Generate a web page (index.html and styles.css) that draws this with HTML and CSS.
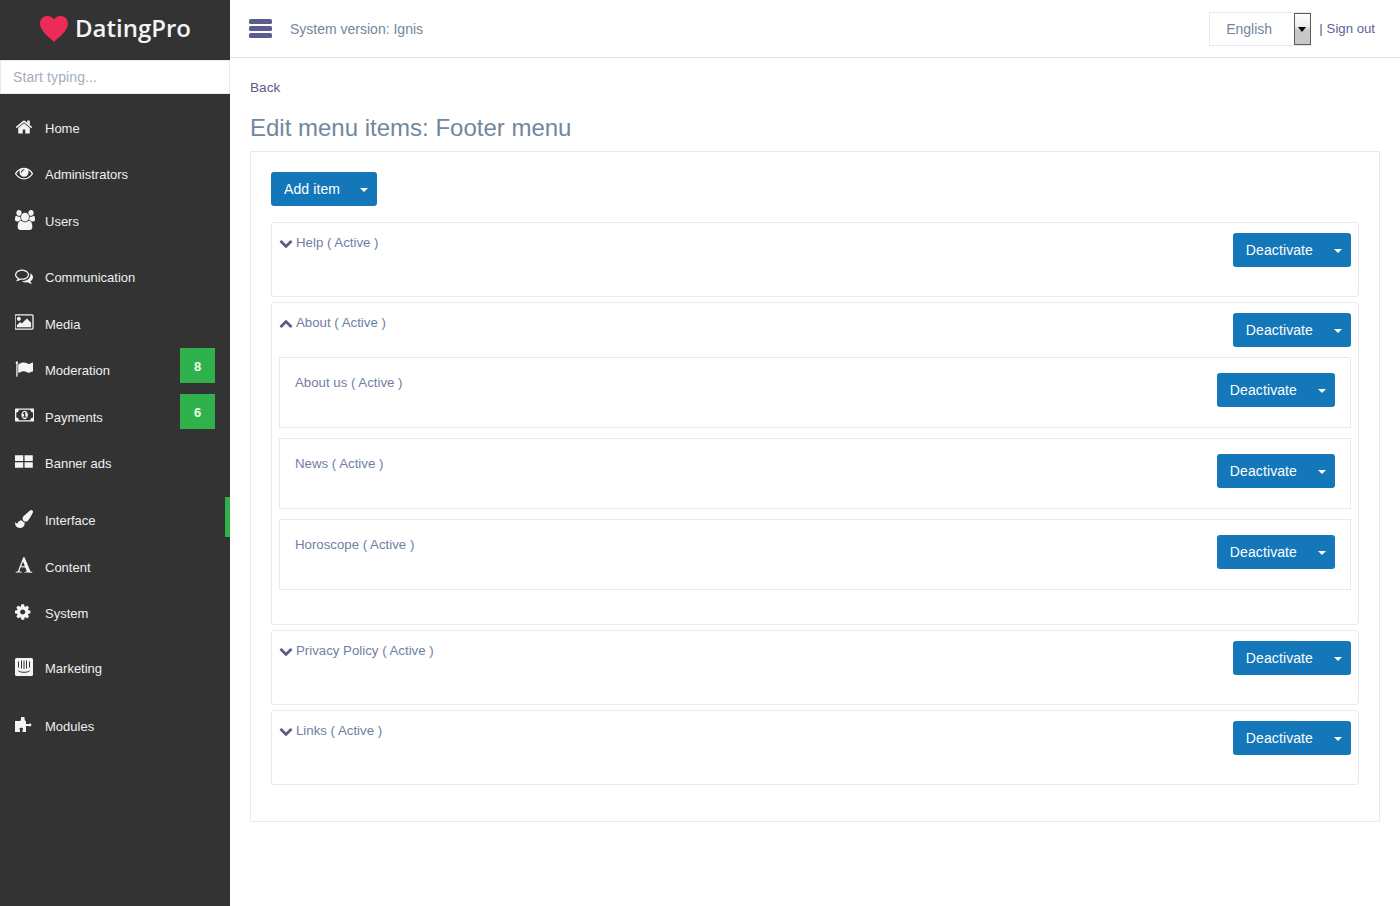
FILE: index.html
```html
<!DOCTYPE html>
<html lang="en">
<head>
<meta charset="utf-8">
<title>Edit menu items: Footer menu</title>
<link rel="stylesheet" href="styles.css">
</head>
<body>
<div class="app">
  <aside class="sidebar">
    <a class="logo" href="#">
      <svg class="logo-heart" viewBox="0 0 28 26"><path d="M14 26C9 21 0 15 0 7.500 0 3 3.400 0 7.500 0 10.300 0 12.700 1.300 14 3.500 15.300 1.300 17.700 0 20.500 0 24.600 0 28 3 28 7.500 28 15 19 21 14 26Z"/></svg>
      <span class="logo-text">DatingPro</span>
    </a>
    <div class="search"><input class="search-input" type="text" placeholder="Start typing..."></div>
    <ul class="nav">
      <li class="nav-item"><span class="nav-icon"><svg class="ico" viewBox="0 0 1792 1792"><path d="M1472 992v480q0 26-19 45t-45 19h-384v-384h-256v384h-384q-26 0-45-19t-19-45v-480q0-1 .5-3t.5-3l575-474 575 474q1 2 1 6zm223-69l-62 74q-8 9-21 11h-3q-13 0-21-7l-692-577-692 577q-12 8-24 7-13-2-21-11l-62-74q-8-10-7-23.500t11-21.500l719-599q32-26 76-26t76 26l244 204v-195q0-14 9-23t23-9h192q14 0 23 9t9 23v408l219 182q10 8 11 21.500t-7 23.500z"/></svg></span>Home</li>
      <li class="nav-item nav-admin"><span class="nav-icon"><svg class="ico" viewBox="0 0 1792 1792"><path d="M1664 960q-152-236-381-353 61 104 61 225 0 185-131.500 316.500t-316.500 131.500-316.500-131.500-131.500-316.500q0-121 61-225-229 117-381 353 133 205 333.500 326.500t434.500 121.500 434.500-121.500 333.500-326.500zm-720-384q0-20-14-34t-34-14q-125 0-214.500 89.500t-89.500 214.500q0 20 14 34t34 14 34-14 14-34q0-86 61-147t147-61q20 0 34-14t14-34zm848 384q0 34-20 69-140 230-376.500 368.500t-499.500 138.500-499.500-139-376.500-368q-20-35-20-69t20-69q140-229 376.500-368t499.500-139 499.500 139 376.500 368q20 35 20 69z"/></svg></span>Administrators</li>
      <li class="nav-item"><span class="nav-icon"><svg class="ico ico-users" viewBox="0 0 1920 1792" preserveAspectRatio="none"><path d="M593 896q-162 5-265 128h-134q-82 0-138-40.500t-56-118.500q0-353 124-353 6 0 43.500 21t97.500 42.500 119 21.500q67 0 133-23-5 37-5 66 0 139 81 256zm1071 637q0 120-73 189.500t-194 69.500h-874q-121 0-194-69.500t-73-189.500q0-53 3.500-103.500t14-109 26.500-108.500 43-97.500 62-81 85.500-53.500 111.500-20q10 0 43 21.500t73 48 107 48 135 21.500 135-21.500 107-48 73-48 43-21.500q61 0 111.500 20t85.500 53.500 62 81 43 97.500 26.500 108.500 14 109 3.500 103.500zm-1024-1277q0 106-75 181t-181 75-181-75-75-181 75-181 181-75 181 75 75 181zm704 384q0 159-112.500 271.500t-271.500 112.500-271.500-112.500-112.500-271.500 112.500-271.500 271.500-112.500 271.500 112.500 112.500 271.500zm576 225q0 78-56 118.500t-138 40.500h-134q-103-123-265-128 81-117 81-256 0-29-5-66 66 23 133 23 59 0 119-21.500t97.500-42.500 43.500-21q124 0 124 353zm-128-609q0 106-75 181t-181 75-181-75-75-181 75-181 181-75 181 75 75 181z"/></svg></span>Users</li>
      <li class="nav-item nav-gap-a"><span class="nav-icon"><svg class="ico" viewBox="0 0 1792 1792"><path d="M704 384q-153 0-286 52t-211.500 141-78.500 191q0 82 53 158t149 132l97 56-35 84q34-20 62-39l44-31 53 10q78 14 153 14 153 0 286-52t211.500-141 78.500-191-78.500-191-211.500-141-286-52zm0-128q191 0 353.500 68.500t256.500 186.500 94 257-94 257-256.500 186.500-353.500 68.500q-86 0-176-16-124 88-278 128-36 9-86 16h-3q-11 0-20.500-8t-11.500-21q-1-3-1-6.500t.5-6.500 2-6l2.500-5 3.500-5.500 4-5 4.500-5 4-4.500q5-6 23-25t26-29.500 22.500-29 25-38.500 20.500-44q-124-72-195-177t-71-224q0-139 94-257t256.500-186.500 353.500-68.500zm822 1169q10 24 20.500 44t25 38.500 22.500 29 26 29.500 23 25q1 1 4 4.500t4.500 5 4 5 3.500 5.500l2.500 5 2 6 .5 6.500-1 6.500q-3 14-13 22t-22 7q-50-7-86-16-154-40-278-128-90 16-176 16-271 0-472-132 58 4 88 4 161 0 309-45t264-129q125-92 192-212t67-254q0-77-23-152 129 71 204 178t75 230q0 120-71 224.500t-195 176.500z"/></svg></span>Communication</li>
      <li class="nav-item"><span class="nav-icon"><svg class="ico ico-wide" viewBox="0 0 1920 1792"><path d="M576 576q0 80-56 136t-136 56-136-56-56-136 56-136 136-56 136 56 56 136zm1024 384v448h-1408v-192l320-320 160 160 512-512zm96-704h-1600q-13 0-22.500 9.500t-9.500 22.500v1216q0 13 9.500 22.500t22.500 9.500h1600q13 0 22.500-9.500t9.500-22.500v-1216q0-13-9.500-22.500t-22.500-9.500zm160 32v1216q0 66-47 113t-113 47h-1600q-66 0-113-47t-47-113v-1216q0-66 47-113t113-47h1600q66 0 113 47t47 113z"/></svg></span>Media</li>
      <li class="nav-item"><span class="nav-icon"><svg class="ico" viewBox="0 0 1792 1792"><path d="M320 256q0 72-64 110v1266q0 13-9.500 22.500t-22.500 9.500h-64q-13 0-22.500-9.500t-9.500-22.500v-1266q-64-38-64-110 0-53 37.500-90.500t90.500-37.500 90.500 37.500 37.500 90.500zm1472 64v763q0 25-12.500 38.500t-39.500 27.500q-215 116-369 116-61 0-123.500-22t-108.500-48-115.500-48-142.500-22q-192 0-464 146-17 9-33 9-26 0-45-19t-19-45v-742q0-32 31-55 21-14 79-43 236-120 421-120 107 0 200 29t219 88q38 19 88 19 54 0 117.500-21t110-47 88-47 54.500-21q26 0 45 19t19 45z"/></svg></span>Moderation<span class="badge badge-first">8</span></li>
      <li class="nav-item"><span class="nav-icon"><svg class="ico ico-wide" viewBox="0 0 1920 1792"><path d="M768 1152h384v-96h-128v-448h-114l-148 137 77 80q42-37 55-57h2v288h-128v96zm512-256q0 70-21 142t-59.500 134-101.500 101-138 39-138-39-101.500-101-59.500-134-21-142 21-142 59.500-134 101.500-101 138-39 138 39 101.500 101 59.500 134 21 142zm512 256v-512q-106 0-181-75t-75-181h-1152q0 106-75 181t-181 75v512q106 0 181 75t75 181h1152q0-106 75-181t181-75zm128-832v1152q0 26-19 45t-45 19h-1792q-26 0-45-19t-19-45v-1152q0-26 19-45t45-19h1792q26 0 45 19t19 45z"/></svg></span>Payments<span class="badge badge-second">6</span></li>
      <li class="nav-item"><span class="nav-icon"><svg class="ico" viewBox="0 0 1792 1792" preserveAspectRatio="none"><path d="M0 230H820V800H0ZM950 230H1770V800H950ZM0 910H820V1480H0ZM950 910H1770V1480H950Z"/></svg></span>Banner ads</li>
      <li class="nav-item nav-gap-b nav-active"><span class="nav-icon"><svg class="ico" viewBox="0 0 1792 1792"><path d="M1615 0q70 0 122.500 46.500t52.500 116.500q0 63-45 151-332 629-465 752-97 91-218 91-126 0-216.500-92.500t-90.500-219.500q0-128 92-212l638-579q59-54 130-54zm-909 1034q39 76 106.500 130t150.500 76l1 71q4 213-129.500 347t-348.500 134q-123 0-218-46.500t-152.500-127.500-86.500-183-29-220q7 5 41 30t62 44.500 59 36.500 46 17q41 0 55-37 25-66 57.500-112.500t69.500-76 88-47.500 103-25.500 125-10.500z"/></svg></span>Interface</li>
      <li class="nav-item"><span class="nav-icon"><svg class="ico" viewBox="0 0 1792 1792"><path d="M789 559l-170 450q33 0 136.500 2t160.500 2q19 0 57-2-87-253-184-452zm-725 1105l2-79q23-7 56-12.500t57-10.500 49.500-14.500 44.500-29 31-50.500l237-616 280-724h128q8 14 11 21l205 480q33 78 106 257.500t114 274.500q15 34 58 144.500t72 168.500q20 45 35 57 19 15 88 29.500t84 20.500q6 38 6 57 0 4-.5 13t-.5 13q-63 0-190-8t-191-8q-76 0-215 7t-178 8q0-43 4-78l131-28q1 0 12.500-2.500t15.500-3.500 14.500-4.500 15-6.500 11-8 9-11 2.500-14q0-16-31-96.500t-72-177.500-42-100l-450-2q-26 58-76.500 195.500t-50.500 162.500q0 22 14 37.500t43.500 24.500 48.500 13.500 57 8.500 41 4q1 19 1 58 0 9-2 27-58 0-174.500-10t-174.500-10q-8 0-26.500 4t-21.500 4q-80 14-188 14z"/></svg></span>Content</li>
      <li class="nav-item"><span class="nav-icon"><svg class="ico ico-gear" viewBox="128 0 1664 1792"><path d="M1152 896q0-106-75-181t-181-75-181 75-75 181 75 181 181 75 181-75 75-181zm512-109v222q0 12-8 23t-20 13l-185 28q-19 54-39 91 35 50 107 138 10 12 10 25t-9 23q-27 37-99 108t-94 71q-12 0-26-9l-138-108q-44 23-91 38-16 136-29 186-7 28-36 28h-222q-14 0-24.500-8.500t-11.500-21.500l-28-184q-49-16-90-37l-141 107q-10 9-25 9-14 0-25-11-126-114-165-168-7-10-7-23 0-12 8-23 15-21 51-66.500t54-70.500q-27-50-41-99l-183-27q-13-2-21-12.500t-8-23.500v-222q0-12 8-23t19-13l186-28q14-46 39-92-40-57-107-138-10-12-10-24 0-10 9-23 26-36 98.500-107.500t94.500-71.500q13 0 26 10l138 107q44-23 91-38 16-136 29-186 7-28 36-28h222q14 0 24.500 8.500t11.500 21.500l28 184q49 16 90 37l142-107q9-9 24-9 13 0 25 10 129 119 165 170 7 8 7 22 0 12-8 23-15 21-51 66.500t-54 70.500q26 50 41 98l183 28q13 2 21 12.500t8 23.500z"/></svg></span>System</li>
      <li class="nav-item nav-gap-c"><span class="nav-icon"><svg class="ico" viewBox="0 0 18 18"><path fill-rule="evenodd" d="M1.500 0H16.500A1.500 1.500 0 0 1 18 1.500V16.500A1.500 1.500 0 0 1 16.500 18H1.500A1.500 1.500 0 0 1 0 16.500V1.500A1.500 1.500 0 0 1 1.500 0ZM3 3.500V9.500H4V3.500ZM6 2.500V10.500H7V2.500ZM8.500 2.500V11H9.500V2.500ZM11 2.500V10.500H12V2.500ZM14 3.500V9.500H15V3.500ZM2.800 12.200 3.400 13.200C6.500 15.300 11.500 15.300 14.600 13.200L15.200 12.200C11.500 14.300 6.500 14.300 2.800 12.200Z"/></svg></span>Marketing</li>
      <li class="nav-item nav-gap-d"><span class="nav-icon"><svg class="ico" viewBox="0 0 18 18"><path d="M6 1H9.500V2.800C9.500 3.600 10 4 10 4.800H11V8H13.500C14 8 14.500 7.600 15.200 7.600 16.800 7.600 16.800 10.400 15.200 10.400 14.500 10.400 14 10 13.500 10H11V16H7.500V14.800C7.500 13.500 8 13.500 8 12.800 8 11.400 4.500 11.400 4.500 12.800 4.500 13.500 5 13.500 5 14.800V16H0V5H5.500C5.500 4 6 3.800 6 2.800Z"/></svg></span>Modules</li>
    </ul>
  </aside>
  <div class="main">
    <header class="topbar">
      <svg class="burger" viewBox="0 0 23 19"><rect width="23" height="5" rx="1.500"/><rect y="7" width="23" height="5" rx="1.500"/><rect y="14" width="23" height="5" rx="1.500"/></svg>
      <span class="version">System version: Ignis</span>
      <div class="lang">
        <span class="lang-value">English</span>
        <span class="lang-arrow"></span>
      </div>
      <span class="pipe">|</span>
      <a class="signout" href="#">Sign out</a>
    </header>
    <main class="content">
      <a class="back" href="#">Back</a>
      <h1 class="title">Edit menu items: Footer menu</h1>
      <section class="panel">
        <div class="btn btn-add"><span class="btn-label">Add item</span><span class="caret"></span></div>
        <div class="row">
          <div class="row-head">
            <svg class="chev" viewBox="0 0 1792 1792"><path d="M1683 808l-742 741q-19 19-45 19t-45-19l-742-741q-19-19-19-45.500t19-45.500l166-165q19-19 45-19t45 19l531 531 531-531q19-19 45-19t45 19l166 165q19 19 19 45.500t-19 45.500z"/></svg>
            <a class="row-title" href="#">Help ( Active )</a>
            <div class="btn"><span class="btn-label">Deactivate</span><span class="caret"></span></div>
          </div>
        </div>
        <div class="row row-open">
          <div class="row-head">
            <svg class="chev" viewBox="0 0 1792 1792"><path d="M1683 1331l-166 165q-19 19-45 19t-45-19l-531-531-531 531q-19 19-45 19t-45-19l-166-165q-19-19-19-45.500t19-45.500l742-741q19-19 45-19t45 19l742 741q19 19 19 45.500t-19 45.500z"/></svg>
            <a class="row-title" href="#">About ( Active )</a>
            <div class="btn"><span class="btn-label">Deactivate</span><span class="caret"></span></div>
          </div>
          <div class="sub">
            <a class="sub-title" href="#">About us ( Active )</a>
            <div class="btn"><span class="btn-label">Deactivate</span><span class="caret"></span></div>
          </div>
          <div class="sub">
            <a class="sub-title" href="#">News ( Active )</a>
            <div class="btn"><span class="btn-label">Deactivate</span><span class="caret"></span></div>
          </div>
          <div class="sub">
            <a class="sub-title" href="#">Horoscope ( Active )</a>
            <div class="btn"><span class="btn-label">Deactivate</span><span class="caret"></span></div>
          </div>
        </div>
        <div class="row">
          <div class="row-head">
            <svg class="chev" viewBox="0 0 1792 1792"><path d="M1683 808l-742 741q-19 19-45 19t-45-19l-742-741q-19-19-19-45.500t19-45.500l166-165q19-19 45-19t45 19l531 531 531-531q19-19 45-19t45 19l166 165q19 19 19 45.500t-19 45.500z"/></svg>
            <a class="row-title" href="#">Privacy Policy ( Active )</a>
            <div class="btn"><span class="btn-label">Deactivate</span><span class="caret"></span></div>
          </div>
        </div>
        <div class="row">
          <div class="row-head">
            <svg class="chev" viewBox="0 0 1792 1792"><path d="M1683 808l-742 741q-19 19-45 19t-45-19l-742-741q-19-19-19-45.500t19-45.500l166-165q19-19 45-19t45 19l531 531 531-531q19-19 45-19t45 19l166 165q19 19 19 45.500t-19 45.500z"/></svg>
            <a class="row-title" href="#">Links ( Active )</a>
            <div class="btn"><span class="btn-label">Deactivate</span><span class="caret"></span></div>
          </div>
        </div>
      </section>
    </main>
  </div>
</div>
</body>
</html>
```

FILE: styles.css
```css
* { box-sizing: border-box; }
html, body { margin: 0; height: 100%; }
body {
  font-family: "Liberation Sans", Arial, sans-serif;
  font-size: 14px;
  line-height: 20px;
  color: #73879c;
  background: #fff;
  overflow: hidden;
}
a { text-decoration: none; }
.app { display: flex; height: 906px; }

.sidebar { flex: 0 0 230px; background: #333; display: flex; flex-direction: column; }
.logo { height: 60px; display: flex; align-items: center; padding-left: 40px; gap: 7px; }
.logo-heart { width: 28px; height: 26px; fill: #ee2b57; margin-top: -2px; }
.logo-text { font-family: "Open Sans", sans-serif; font-size: 24px; font-weight: 600; color: #f4f4f4; line-height: 30px; margin-top: -4px; }
.search { height: 34px; }
.search-input {
  display: block; width: 100%; height: 34px; padding: 0 12px;
  border: 1px solid #e6e9ed; background: #fff;
  font: 14px "Liberation Sans", Arial, sans-serif; letter-spacing: .1px; color: #73879c; outline: 0;
}
.search-input::placeholder { color: #a4aebb; opacity: 1; }

.nav { list-style: none; margin: 0; padding: 11px 0 0; font-size: 13px; }
.nav-item { position: relative; height: 46.500px; padding: 2px 0 0 15px; display: flex; align-items: center; color: #eceff2; }
.nav-admin { margin-top: -1px; margin-bottom: 1px; }
.nav-gap-a { margin-top: 9.500px; }
.nav-gap-b { margin-top: 10.500px; }
.nav-gap-c { margin-top: 8.500px; }
.nav-gap-d { margin-top: 11.500px; }
.nav-icon { flex: 0 0 30px; display: flex; margin-top: -5px; }
.nav-admin .nav-icon { margin-top: -3px; }
.ico { width: 18px; height: 18px; fill: #f2f4f6; display: block; }
.ico-wide { width: 19.300px; }
.ico-users { width: 20px; height: 20px; }
.ico-gear { width: 16.700px; }
.badge {
  position: absolute; right: 15px; width: 35px; height: 35px;
  background: #2fb24c; color: #eafbe9; font-weight: 700; font-size: 13px;
  line-height: 37px; text-align: center;
}
.badge-first { top: 1px; }
.badge-second { top: 0; }
.nav-active::after {
  content: ""; position: absolute; right: 0; top: 0; width: 5px; height: 40px; background: #2fb24c;
}

.main { flex: 1; min-width: 0; display: flex; flex-direction: column; }
.topbar { height: 58px; border-bottom: 1px solid #dfe1e8; display: flex; align-items: center; padding: 0 25px 0 19px; }
.burger { width: 23px; height: 19px; fill: #5b5b8f; }
.version { margin-left: 18px; }
.lang { margin-left: auto; width: 102px; height: 34px; border: 1px solid #e6e9ed; display: flex; align-items: center; padding-left: 16px; color: #73879c; position: relative; }
.lang-value { flex: 1; }
.lang-arrow {
  position: relative; width: 17px; height: 32px; margin-right: -1px;
  border: 1px solid #5a5a5a;
  background: linear-gradient(#fff 0, #eee 40%, #c8c8c8 55%, #c8c8c8 100%);
}
.lang-arrow::after {
  content: ""; position: absolute; left: 3px; top: 13px;
  border: 4px solid transparent; border-top: 5px solid #000; border-bottom: 0;
}
.pipe { margin-left: 8px; color: #5b5b8f; font-size: 13.200px; }
.signout { margin-left: 4px; color: #5f6396; font-size: 13.200px; }

.content { flex: 1; padding: 20px 20px 0; }
.back { display: block; color: #5b5b8f; line-height: 20px; font-size: 13.600px; }
.title { margin: 17px 0 10px; font-size: 24px; line-height: 26px; font-weight: 400; color: #73879c; }
.panel { height: 671px; border: 1px solid #e6e9ed; padding: 20px; }

.btn { display: inline-flex; align-items: center; height: 34px; background: #1377b9; border-radius: 3px; color: #fff; flex: none; letter-spacing: .1px; white-space: nowrap; }
.btn-label { padding-left: 13px; padding-right: 14px; flex: none; }
.caret { width: 8px; height: 4px; margin: 1px 9px 0 7px; border: 4px solid transparent; border-top-color: #fff; border-bottom: 0; flex: none; }
.btn-add { margin-bottom: 16px; display: flex; width: 106px; }
.btn-add .btn-label { padding-right: 13px; }

.row { border: 1px solid #e6e9ed; border-radius: 3px; height: 75px; padding: 10px 7px 0; margin-bottom: 5px; }
.row-open { height: 323px; }
.row-head { display: flex; align-items: flex-start; }
.chev { width: 14px; height: 14px; fill: #5b5b8f; margin: 3px 3px 0 0; flex: none; }
.row-title { color: #6f80a3; flex: 1; font-size: 13.250px; }
.sub { display: flex; align-items: flex-start; height: 71px; border: 1px solid #e6e9ed; padding: 15px 15px 0; margin-top: 10px; }
.sub-title { flex: 1; color: #6f80a3; font-size: 13.250px; }
```
